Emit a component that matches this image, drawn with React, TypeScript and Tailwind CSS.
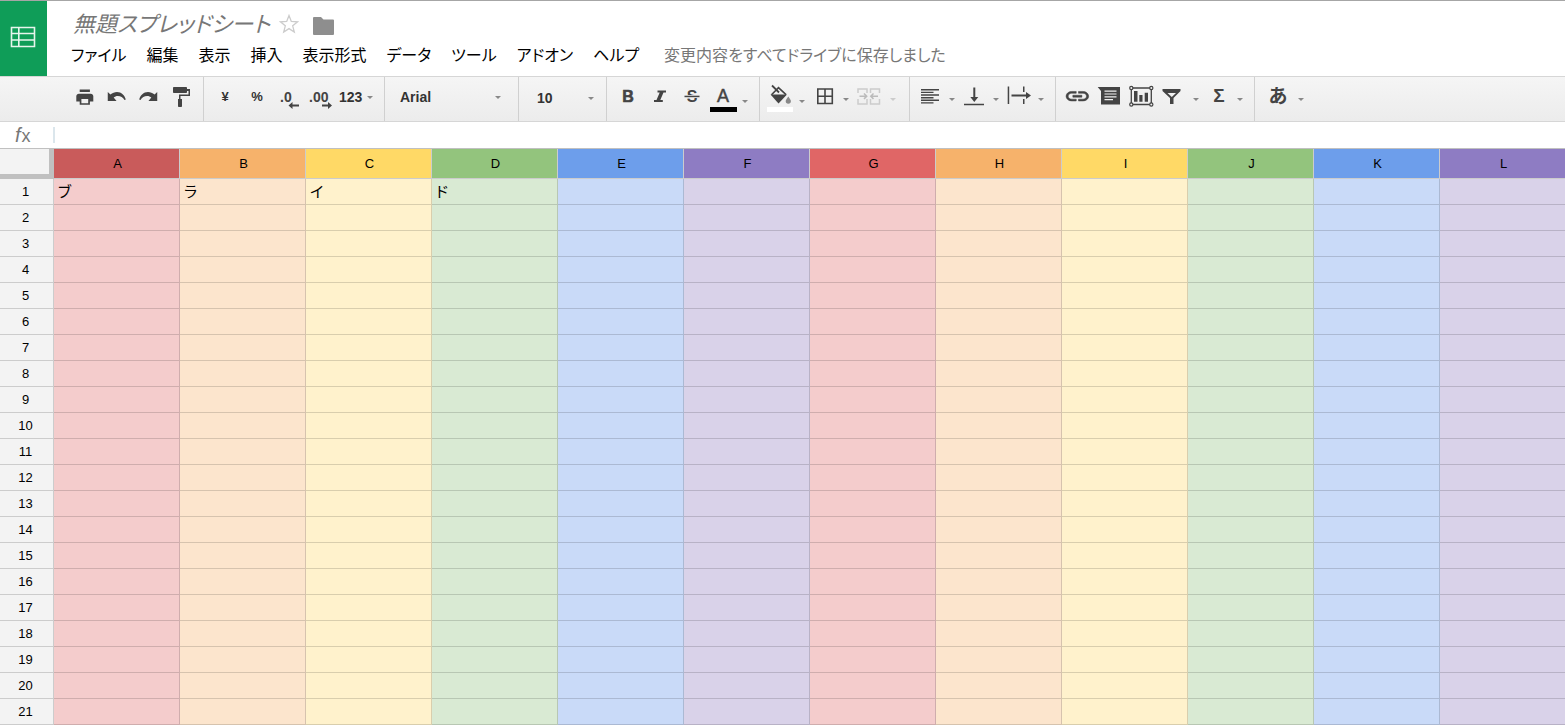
import { useState } from 'react';
import type { ReactNode } from 'react';

const menus = ['ファイル', '編集', '表示', '挿入', '表示形式', 'データ', 'ツール', 'アドオン', 'ヘルプ'];

const columns = [
  { name: 'A', head: 'bg-[#c95b5b]', body: 'bg-[#f4cccc]' },
  { name: 'B', head: 'bg-[#f6b26b]', body: 'bg-[#fce5cd]' },
  { name: 'C', head: 'bg-[#ffd966]', body: 'bg-[#fff2cc]' },
  { name: 'D', head: 'bg-[#93c47d]', body: 'bg-[#d9ead3]' },
  { name: 'E', head: 'bg-[#6d9eeb]', body: 'bg-[#c9daf8]' },
  { name: 'F', head: 'bg-[#8e7cc3]', body: 'bg-[#d9d2e9]' },
  { name: 'G', head: 'bg-[#e06666]', body: 'bg-[#f4cccc]' },
  { name: 'H', head: 'bg-[#f6b26b]', body: 'bg-[#fce5cd]' },
  { name: 'I', head: 'bg-[#ffd966]', body: 'bg-[#fff2cc]' },
  { name: 'J', head: 'bg-[#93c47d]', body: 'bg-[#d9ead3]' },
  { name: 'K', head: 'bg-[#6d9eeb]', body: 'bg-[#c9daf8]' },
  { name: 'L', head: 'bg-[#8e7cc3]', body: 'bg-[#d9d2e9]' },
];

const cells: Record<string, string> = { A1: 'ブ', B1: 'ラ', C1: 'イ', D1: 'ド' };

const rows = Array.from({ length: 21 }, (_, i) => i + 1);

const UNDO = 'M2 7l3 2.500C7.300 8 9.800 7 12.500 7c5 0 8.800 3.200 10 7.500l-1.500.6C19.400 12.200 16.600 11 13.500 11c-2 0-3.500.6-4.800 1.500L12 16H2z';

function Group({ className, children }: { className: string; children: ReactNode }) {
  return <div className={`flex shrink-0 items-start border-r border-[#d0d0d0] ${className}`}>{children}</div>;
}

// width is the drawing width, caret is the x position of the small down arrow
function Tool({ label, width = 32, caret, caretY = 21, disabled, children }: {
  label: string;
  width?: number;
  caret?: number;
  caretY?: number;
  disabled?: boolean;
  children: ReactNode;
}) {
  return (
    <button aria-label={label} title={label} disabled={disabled} className="block shrink-0">
      <svg width={width} height="40" viewBox={`0 0 ${width} 40`} fill="#444" className="block">
        {children}
        {caret && <path d={`M${caret - 3} ${caretY}h6l-3 3z`} fill={disabled ? '#ccc' : '#888'} />}
      </svg>
    </button>
  );
}

function Caret() {
  return (
    <svg width="6" height="3" viewBox="0 0 6 3" fill="#888" className="pointer-events-none shrink-0">
      <path d="M0 0h6L3 3z" />
    </svg>
  );
}

function Header() {
  const [title, setTitle] = useState('無題スプレッドシート');

  return (
    <header className="flex border-t border-[#a6a6a6]">
      <a href="#home" aria-label="スプレッドシート ホーム" className="flex w-[47px] h-[75px] shrink-0 items-center justify-center bg-[#0f9d58] pr-px pb-[3px]">
        <svg width="26" height="22" viewBox="0 0 26 22" fill="none" stroke="#e6f5ec" strokeWidth="1.6">
          <path d="M1.500 1.500h23v19h-23zM1.500 7.500h23M1.500 14h23M8.800 1.500v19" />
        </svg>
      </a>
      <div className="flex flex-col">
        <div className="flex h-[42px] items-center pl-[26px] pt-1">
          <input aria-label="タイトル" value={title} onChange={e => setTitle(e.target.value)}
            className="w-[204px] bg-transparent text-[22px] italic text-[#777] outline-none [font-feature-settings:'palt']" />
          <button aria-label="スターを付ける" className="ml-[2px]">
            <svg width="20" height="20" viewBox="0 0 20 20" fill="none" stroke="#ccc" strokeWidth="1.3">
              <path d="M10 1.500l2.300 5.900 6.300.4-4.900 4 1.600 6.200-5.300-3.400L4.700 18l1.600-6.200-4.900-4 6.300-.4z" />
            </svg>
          </button>
          <button aria-label="フォルダに移動" className="ml-[14px] pt-1">
            <svg width="21" height="18" viewBox="0 0 21 18" fill="#8e8e8e">
              <path d="M1 0h7l2.500 2.500H20q1 0 1 1V17q0 1-1 1H1q-1 0-1-1V1q0-1 1-1z" />
            </svg>
          </button>
        </div>
        <div className="flex h-[26px] items-center pl-[14px]">
          <nav className="flex">
            {menus.map(m => (
              <button key={m} className="px-[10px] text-[16px] leading-6 text-black whitespace-nowrap [font-feature-settings:'palt']">{m}</button>
            ))}
          </nav>
          <span className="ml-[15px] text-[16px] leading-6 text-[#777] whitespace-nowrap [font-feature-settings:'palt']">変更内容をすべてドライブに保存しました</span>
        </div>
      </div>
    </header>
  );
}

function Toolbar() {
  return (
    <div role="toolbar" className="flex h-[46px] overflow-hidden border-y border-[#d6d6d6] bg-linear-to-b from-[#f5f5f5] to-[#ececec]">
      <Group className="pl-[68px] pr-[7px]">
        <Tool label="印刷">
          <path transform="translate(6.6 10) scale(.85)" fillRule="evenodd" d="M19 8H5c-1.660 0-3 1.340-3 3v6h4v4h12v-4h4v-6c0-1.660-1.340-3-3-3zm-3 11H8v-5h8v5zM18 3H6v3h12V3z" />
        </Tool>
        <Tool label="元に戻す">
          <path transform="translate(6 8) scale(.88 1)" d={UNDO} />
        </Tool>
        <Tool label="やり直し">
          <path transform="translate(27 8) scale(-.88 1)" d={UNDO} />
        </Tool>
        <Tool label="書式を貼り付け">
          <path transform="translate(5 8)" d="M18 4V3c0-.55-.45-1-1-1H5c-.55 0-1 .45-1 1v4c0 .55.45 1 1 1h12c.55 0 1-.45 1-1V6h1.500v3.500H10V14H9v7c0 .55.45 1 1 1h2c.55 0 1-.45 1-1v-7h-1.500v-3H21V4h-3z" />
        </Tool>
      </Group>

      <Group className="pl-[5px] font-bold">
        <button aria-label="通貨" className="h-10 w-8 text-[13px] text-[#333]">¥</button>
        <button aria-label="パーセント" className="h-10 w-8 text-[13px] text-[#333]">%</button>
        <Tool label="小数点以下の桁数を減らす">
          <text x="7" y="25" fontSize="14">.0</text>
          <path d="M15.500 28.500l4-3.500v2.500h6.500v2h-6.500V32z" />
        </Tool>
        <Tool label="小数点以下の桁数を増やす">
          <text x="4" y="25" fontSize="14">.00</text>
          <path d="M27 28.500L23 25v2.500h-6v2h6V32z" />
        </Tool>
        <button aria-label="表示形式の詳細" className="flex h-10 w-[47px] items-center gap-[5px] pl-[2px] text-[14px] text-[#333]">
          123 <Caret />
        </button>
      </Group>

      <Group className="pr-[17px]">
        <div className="flex h-10 items-center">
          <select aria-label="フォント" className="w-[110px] appearance-none bg-transparent pl-[15px] text-[14px] font-bold text-[#333] outline-none">
            <option>Arial</option>
          </select>
          <Caret />
        </div>
      </Group>

      <Group className="pr-[12px]">
        <div className="flex h-[42px] items-center">
          <select aria-label="フォント サイズ" className="w-[69px] appearance-none bg-transparent pl-[18px] text-[14px] font-bold text-[#333] outline-none">
            <option>10</option>
          </select>
          <Caret />
        </div>
      </Group>

      <Group className="pl-[5px] pr-[7px]">
        <Tool label="太字">
          <text x="16" y="25" fontSize="16" fontWeight="bold" textAnchor="middle" stroke="#444" strokeWidth=".6">B</text>
        </Tool>
        <Tool label="斜体">
          <path d="M13.500 13.500h8.500v2h-2.500l-3.200 7.500h2.500v2H10v-2h2.500l3.200-7.500h-2.200z" />
        </Tool>
        <Tool label="取り消し線">
          <text x="16" y="25" fontSize="16" fontWeight="bold" textAnchor="middle">S</text>
          <path d="M8 18h16v3H8z" fill="#f0f0f0" />
          <path d="M8.500 18.700h15v1.500h-15z" />
        </Tool>
        <Tool label="テキストの色" width={44} caret={37} caretY={23}>
          <text x="15" y="25" fontSize="18" textAnchor="middle" stroke="#444" strokeWidth=".5">A</text>
          <path d="M2 30h27v5H2z" fill="#000" />
        </Tool>
      </Group>

      <Group className="pl-[5px] pr-[8px]">
        <Tool label="塗りつぶしの色" width={44} caret={37} caretY={23}>
          <path d="M6.500 17.700l7-7 7.500 7" fill="none" stroke="#444" strokeWidth="1.600" />
          <path d="M7 8.500l7 7" fill="none" stroke="#444" strokeWidth="1.800" />
          <path d="M5.500 17.500h16.500l-8.500 9z" />
          <path d="M23.300 19.500c1.500 2.200 2.600 3.400 2.600 4.600a2.600 2.600 0 0 1-5.200 0c0-1.200 1.100-2.400 2.600-4.600z" fill="#888" />
          <path d="M2 30h26v5H2z" fill="#fff" />
        </Tool>
        <Tool label="枠線" width={44} caret={37}>
          <path d="M8.800 12h14.500v14.500H8.800zM16 12v14.500M8.800 19.200h14.500" fill="none" stroke="#444" strokeWidth="1.600" />
        </Tool>
        <Tool label="セルを結合" width={48} caret={40} disabled>
          <g fill="none" stroke="#ccc" strokeWidth="1.500">
            <path d="M14 16v-4H5v4M5 22v5h9v-5M17.500 16v-4h9v4M26.500 22v5h-9v-5" />
            <path d="M6.500 19.200h7M11 16.500l2.700 2.700-2.700 2.700M25 19.200h-7M20.500 16.500l-2.700 2.700 2.700 2.700" stroke="#bbb" />
          </g>
        </Tool>
      </Group>

      <Group className="pl-[4px] pr-[9px]">
        <Tool label="水平方向の配置" width={44} caret={38}>
          <path d="M7 12h18v1.500H7zM7 14.700h12.500v1.400H7zM7 17.300h18v1.500H7zM7 20h12.500v1.400H7zM7 22.600h18v1.500H7zM7 25.200h12.500v1.400H7z" />
        </Tool>
        <Tool label="垂直方向の配置" width={44} caret={38}>
          <path d="M15.300 10.500h2v9.500h3l-4 5-4-5h3zM6 26.700h20v1.500H6z" />
        </Tool>
        <Tool label="テキストを折り返す" width={44} caret={39}>
          <path d="M5.700 9.500h1.500v17.500H5.700zM9.500 17.500h14.500V15l5 3.500-5 3.500v-2.500H9.500zM21 9.500h1.500V15H21zM21 22h1.500v5H21z" />
        </Tool>
      </Group>

      <Group className="pl-[5px] pr-[7px]">
        <Tool label="リンクを挿入">
          <path transform="translate(2.800 7.800) scale(1.130 .95)" stroke="#444" strokeWidth=".5" d="M3.900 12c0-1.710 1.390-3.100 3.100-3.100h4V7H7c-2.760 0-5 2.240-5 5s2.240 5 5 5h4v-1.900H7c-1.710 0-3.100-1.390-3.100-3.100zM8 13h8v-2H8v2zm9-6h-4v1.900h4c1.710 0 3.100 1.390 3.100 3.100s-1.390 3.100-3.100 3.100h-4V17h4c2.760 0 5-2.240 5-5s-2.240-5-5-5z" />
        </Tool>
        <Tool label="コメントを挿入">
          <path d="M4.700 10H27v17.500H8V14z" />
          <path d="M11.500 14.200h12M11.500 17h12M11.500 19.800h12M11.500 22.600h8.500" stroke="#f0f0f0" strokeWidth="1.200" />
        </Tool>
        <Tool label="グラフを挿入">
          <path d="M6.300 11h20v16.500h-20z" fill="none" stroke="#444" strokeWidth="1.300" />
          <path d="M9 14h3.500v10.700H9zM14.300 18h3.200v6.700h-3.200zM19.700 15.700H23v9h-3.300z" />
          <g fill="#f0f0f0" stroke="#444" strokeWidth="1.200">
            <circle cx="6.300" cy="11" r="1.600" />
            <circle cx="26.300" cy="11" r="1.600" />
            <circle cx="6.300" cy="27.500" r="1.600" />
            <circle cx="26.300" cy="27.500" r="1.600" />
          </g>
        </Tool>
        <Tool label="フィルタ" width={46} caret={39}>
          <path fillRule="evenodd" d="M5.500 12h18v2l-7 7v6h-3.500v-6l-7.500-7zM10.500 16h8.500l-4.200 4z" />
        </Tool>
        <Tool label="関数" width={44} caret={37}>
          <text x="16" y="25" fontSize="19" fontWeight="bold" textAnchor="middle">Σ</text>
        </Tool>
      </Group>

      <div className="flex items-start pl-[7px]">
        <Tool label="入力ツール" width={46} caret={39}>
          <text x="16" y="26" fontSize="19" fontWeight="bold" textAnchor="middle">あ</text>
        </Tool>
      </div>
    </div>
  );
}

function FormulaBar() {
  const [formula, setFormula] = useState('');

  return (
    <div className="flex h-[27px] items-center border-b border-[#c0c0c0] bg-white">
      <label htmlFor="formula" className="w-[53px] shrink-0 pl-[15px] text-[20px] leading-6 italic text-[#777]">
        f<span className="pl-px text-[18px] not-italic">x</span>
      </label>
      <input id="formula" value={formula} onChange={e => setFormula(e.target.value)}
        className="h-4 flex-1 border-l-2 border-[#dbe6ec] bg-transparent pl-1 text-[13px] outline-none" />
    </div>
  );
}

function Sheet() {
  return (
    <div className="overflow-hidden">
      <table className="w-max table-fixed border-separate border-spacing-0 text-[13px] text-black">
        <colgroup>
          <col className="w-[54px]" />
          {columns.map(c => <col key={c.name} className="w-[126px]" />)}
        </colgroup>
        <thead>
          <tr className="h-[30px]">
            <th aria-label="すべて選択" className="w-[54px] border-r-5 border-b-5 border-[#c0c0c0] bg-[#f3f3f3] p-0" />
            {columns.map(c => (
              <th key={c.name} scope="col" className={`w-[126px] border-r border-b border-[#ccc] p-0 pl-[2px] font-normal ${c.head}`}>{c.name}</th>
            ))}
          </tr>
        </thead>
        <tbody>
          {rows.map(r => (
            <tr key={r} className="h-[26px]">
              <th scope="row" className="border-r border-b border-[#ccc] bg-[#f3f3f3] p-0 pr-[2px] font-normal leading-5">{r}</th>
              {columns.map(c => (
                <td key={c.name} className={`border-r border-b border-black/15 p-0 px-1 text-[15px] leading-5 [font-feature-settings:'palt'] ${c.body}`}>
                  {cells[c.name + r]}
                </td>
              ))}
            </tr>
          ))}
        </tbody>
      </table>
    </div>
  );
}

export default function App() {
  return (
    <div className="overflow-hidden bg-white font-['Liberation_Sans','Noto_Sans_CJK_JP',sans-serif]">
      <Header />
      <Toolbar />
      <FormulaBar />
      <Sheet />
    </div>
  );
}
